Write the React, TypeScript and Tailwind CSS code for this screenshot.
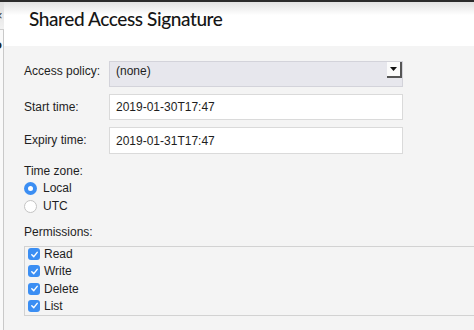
import React from "react";

function Check() {
  return (
    <span className="mt-[1px] flex h-[12px] w-[12px] shrink-0 items-center justify-center rounded-[3px] bg-[#3b8ef3]">
      <svg width="9" height="9" viewBox="0 0 10 10" fill="none">
        <path d="M2 5.3 L4.2 7.4 L8 2.6" stroke="white" strokeWidth="1.6" strokeLinecap="round" strokeLinejoin="round" />
      </svg>
    </span>
  );
}

export default function App() {
  const perms = ["Read", "Write", "Delete", "List"];
  return (
    <div className="relative flex h-[330px] w-[474px] flex-col overflow-hidden bg-[#f4f4f4] font-['Liberation_Sans',Arial,sans-serif] text-[12px] text-[#1e1e1e]">
      <div className="h-[2px] w-full shrink-0 bg-[#2b2b2b]" />
      <div className="flex min-h-0 flex-1">
        {/* left strip of window behind */}
        <div className="flex w-[4px] shrink-0 flex-col overflow-hidden">
          <div className="h-[27px] shrink-0 bg-gradient-to-b from-[#dedede] to-[#f2f2f2] pt-[7px]">
            <span className="ml-[-5px] block text-[13px] leading-[13px] text-[#333]">×</span>
          </div>
          <div className="h-[1px] shrink-0 bg-[#cfcfcf]" />
          <div className="flex-1 border-r border-[#c9c9c9] bg-[#f9f9f9] pt-[8px]">
            <span className="ml-[-6px] block text-[13px] font-bold leading-[13px] text-[#222]">o</span>
          </div>
        </div>
        {/* dialog */}
        <div className="flex min-w-0 flex-1 flex-col">
          <div className="flex h-[44px] shrink-0 items-start bg-gradient-to-b from-[#e2e2e2] via-[#ffffff] via-30% to-[#ffffff] pl-[25px] pt-[7px]">
            <span className="font-['Lato',sans-serif] text-[19px] font-medium leading-[20px] tracking-[-0.4px] text-[#161616]">
              Shared Access Signature
            </span>
          </div>
          <div className="flex flex-1 flex-col pl-[20px]">
            {/* access policy */}
            <div className="mt-[15px] flex h-[26px] items-start">
              <div className="w-[85px] pt-[3px] leading-[15px]">Access policy:</div>
              <div className="relative h-[26px] w-[294px] border border-[#d3d3da] bg-[#e7e7ed] pl-[6px] pt-[2px] leading-[15px]">
                (none)
                <div className="absolute right-0 top-0 flex h-[16px] w-[15px] items-center justify-center border-b-2 border-r-2 border-b-[#555] border-r-[#555] bg-[#fbfbfb]">
                  <svg width="7" height="4" viewBox="0 0 7 4">
                    <path d="M0 0 L7 0 L3.5 4 Z" fill="#111" />
                  </svg>
                </div>
              </div>
            </div>
            {/* start time */}
            <div className="mt-[7px] flex h-[26px] items-center">
              <div className="w-[85px] leading-[15px]">Start time:</div>
              <div className="flex h-[26px] w-[294px] items-center border border-[#dadada] bg-white pl-[6px]">
                2019-01-30T17:47
              </div>
            </div>
            {/* expiry */}
            <div className="mt-[7px] flex h-[27px] items-center">
              <div className="w-[85px] leading-[15px]">Expiry time:</div>
              <div className="flex h-[27px] w-[294px] items-center border border-[#dadada] bg-white pl-[6px]">
                2019-01-31T17:47
              </div>
            </div>
            {/* time zone */}
            <div className="mt-[10px] leading-[14px]">Time zone:</div>
            <div className="mt-[1px] flex h-[18px] items-center gap-[6px]">
              <span className="flex h-[13px] w-[13px] items-center justify-center rounded-full bg-[#3b8ef3]">
                <span className="h-[5px] w-[5px] rounded-full bg-white" />
              </span>
              <span className="leading-[14px]">Local</span>
            </div>
            <div className="flex h-[18px] items-center gap-[6px]">
              <span className="h-[13px] w-[13px] rounded-full border border-[#c4c4c4] bg-white" />
              <span className="leading-[14px]">UTC</span>
            </div>
            {/* permissions */}
            <div className="mt-[10px] leading-[14px]">Permissions:</div>
            <div className="mt-[7px] h-[70px] w-[470px] border border-[#d2d2d2] bg-[#f4f4f4] pl-[3px]">
              {perms.map((p) => (
                <div key={p} className="flex h-[17.3px] items-start gap-[4px]">
                  <Check />
                  <span className="leading-[14px]">{p}</span>
                </div>
              ))}
            </div>
          </div>
        </div>
      </div>
    </div>
  );
}
